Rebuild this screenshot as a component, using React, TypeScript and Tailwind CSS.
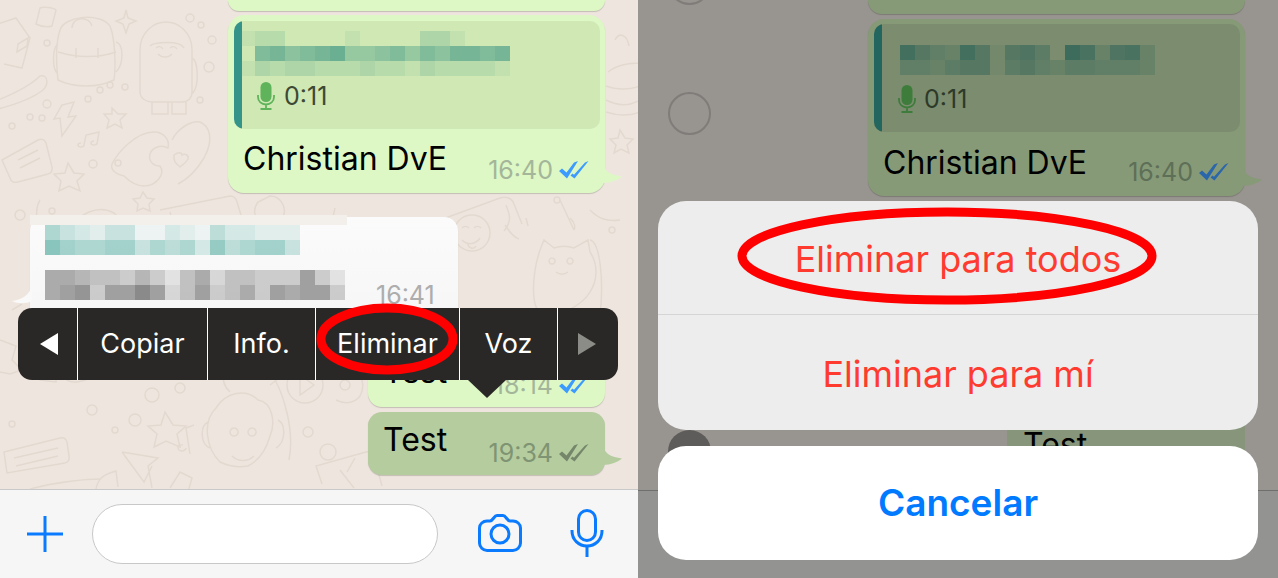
const FONT = "font-['Inter','Liberation_Sans',sans-serif]";

function Pixels({ rows, color, cell = 15 }: { rows: number[][]; color: string; cell?: number }) {
  return (
    <div className="flex flex-col">
      {rows.map((row, i) => (
        <div key={i} className="flex">
          {row.map((v, j) => (
            <div key={j} style={{ width: cell, height: 15, background: color, opacity: v / 10 }} />
          ))}
        </div>
      ))}
    </div>
  );
}

function Checks({ color, className }: { color: string; className?: string }) {
  return (
    <svg className={className} width="30" height="18" viewBox="0 0 30 18" fill={color}>
      <path d="M0 10l3-2.500 4.500 4L15 1.500 19 0 8 17.500z" />
      <path d="M11.500 14.500l2-2 1.500 1.300L26 1.500 29.500 0 15.500 17.500z" />
    </svg>
  );
}

function Tail({ color }: { color: string }) {
  return (
    <svg className="absolute left-full bottom-[9px] -ml-[2px]" width="20" height="20" viewBox="0 0 20 20">
      <path d="M0 0C2 8 8 11 19 12.500C15 16 8 19 0 19Z" fill={color} />
    </svg>
  );
}

function SmallMic({ color }: { color: string }) {
  return (
    <svg width="18" height="28" viewBox="0 0 18 28" fill="none">
      <rect x="3.500" y="0" width="11" height="20" rx="5.500" fill={color} />
      <path d="M1 13v2c0 4.500 3.500 7.500 8 7.500s8-3 8-7.500v-2M9 22.500V27M3.500 27h11" stroke={color} strokeWidth="1.800" />
    </svg>
  );
}

function Doodles() {
  return (
    <svg className="absolute inset-0" width="638" height="489" viewBox="0 0 638 489" fill="none" stroke="#e3d9d0" strokeWidth="1.500">
      {/* milk carton, bread */}
      <path d="M-2 24l18-6 14 20 -8 30-18-4M16 18l14 20M18 44l10 -6 -1 8 -10 6z" />
      <path d="M-2 100c15-6 32-14 42-24 8-2 9 8 3 14-10 8-26 14-45 19" />
      {/* backpack */}
      <path d="M60 30c4-14 40-18 50-4 5 12 6 40 4 54-16 8-40 8-56 0-2-18-2-38 2-50zM72 28c0-12 18-12 20-2M58 52c20 6 40 6 58 0M76 48v10M98 48v10M116 42c8 2 8 22 0 30M58 44c-6 4-6 26 0 30" />
      <path d="M40 8c4-2 14 0 16 2l-4 16c-6 2-12 0-16-2z" />
      {/* star */}
      <path d="M126 10l2 8 8 3-7 3-3 9-3-9-7-3 8-3z" />
      {/* astronaut */}
      <path d="M140 50c0-18 14-28 26-28s26 10 26 28v42c0 6-4 10-10 10h-30c-6 0-12-4-12-10zM150 46c4-4 30-6 34 2M156 48c3-2 5-2 7 1M170 48c3-2 5-2 7 1M158 54c4 4 10 4 14 0M152 102v12h16v-12M172 102v12h14v-12M192 58c6 2 8 28 0 36" />
      <circle cx="47" cy="43" r="3" /><circle cx="190" cy="18" r="4" /><circle cx="201" cy="25" r="3" /><circle cx="209" cy="67" r="5" /><circle cx="212" cy="40" r="4" /><circle cx="125" cy="87" r="3" /><circle cx="110" cy="85" r="3" /><circle cx="100" cy="90" r="3" /><circle cx="88" cy="99" r="3" /><circle cx="47" cy="104" r="4" /><circle cx="12" cy="126" r="3" /><circle cx="30" cy="117" r="3" /><circle cx="42" cy="118" r="3" /><circle cx="200" cy="100" r="3" />
      <path d="M62 105l12-3-6 15 8-1-14 20-2-18-6 1z" />
      <path d="M112 108l6 6 8 0-6 6 2 8-7-4-8 4 2-8-5-6 8 0z" />
      {/* note, card */}
      <path d="M84 145l2-10 13-3-2 12M84 145a3 2 0 1 1 -3-2M97 143a3 2 0 1 1 -3-2" />
      <path d="M2 160l36-20c4-2 7 0 8 3l6 24c1 4-1 6-4 7l-30 8c-4 1-7 0-8-4zM18 160l20-10M20 168l20-10" />
      {/* hearts */}
      <path d="M112 164c6-12 24-32 42-32 10 0 16 8 14 16-8-4-16 0-18 6-2 8 4 12 10 12 6 8-4 20-16 20-8 0-14-4-20-10-8-2-14-6-12-12zM172 140c6-12 20-20 28-18 10 4 14 18 4 36-6 10-14 20-26 26M174 155c4-3 8-3 8 0 3-2 7 0 6 4-2 4-6 6-8 8-3-3-7-5-6-12z" />
      <path d="M68 163l6 10 10 1-7 7 3 10-11-5-10 5 2-10-7-7 11-1z" />
      <path d="M143 192l4 6 7 1-5 5 1 7-7-3-6 3 1-7-5-5 7-1z" />
      <circle cx="20" cy="215" r="5" /><circle cx="52" cy="211" r="3" /><circle cx="93" cy="164" r="4" /><circle cx="118" cy="163" r="3" />
      <path d="M70 235c6-24 30-30 44-22 8 6 8 20 6 30M40 200c-6 10-4 30 6 40M160 210l70-14c4 0 6 2 7 6l8 26M170 212l8 30" />
      <path d="M270 196c10 0 16 10 14 18 -2 10-12 14-20 10-10-4-12-14-6-22zM335 208l-4 18 -16 -4 18 4 18 6M300 215c4 10 4 18 2 24" />
      <path d="M440 220l60-22c6-2 12 0 14 6l8 20M506 205c4 10 6 16-2 26M560 200l14 30M590 210c8 8 16 12 30 10" />
      {/* emoji, cat */}
      <circle cx="472" cy="233" r="18" /><path d="M462 228c2-2 5-2 7 0M474 228c2-2 5-2 7 0M462 240c6 6 14 4 18-2M468 244c0 4 6 6 8 2" />
      <path d="M540 250l4-10 10 8c6-2 14-2 20 0l14-8 2 12c8 12 8 28 0 40-8 14-36 28-48 22-12-6-10-40-2-64zM552 258a3 3 0 1 0 .1 0M570 258a3 3 0 1 0 .1 0M556 272c4 3 8 3 12 0M590 240c10 2 14 40 10 76" />
      <path d="M505 225c4 6 8 12 14 14M526 218l2 8M570 218c4 4 6 8 4 12" />
      <path d="M615 40c4-8 12-6 14 6M608 72c10-8 26-10 34-8M606 86c10 4 24 4 34 0M606 100c12 6 24 6 34 0M606 112c12 4 24 4 34 0" />
      <path d="M620 130l5 8 8 1-6 6 2 8-8-4-7 4 2-8-6-6 8-1z" />
      <circle cx="505" cy="142" r="4" /><circle cx="525" cy="130" r="3" /><circle cx="557" cy="200" r="3" />
      <circle cx="612" cy="230" r="3" />
      {/* lower left */}
      <path d="M0 340l16 6-4 14 10 10-12 4-10-2M40 380l-2-28 14-6-2-14 20 0 0 18-14 6 0 26zM78 372c-16-18-10-48 10-54M88 318l-6 10 16 0M110 344c0 30-34 46-46 34" />
      <path d="M130 340c-8-4-10-16 0-20 4-16 30-20 38-8 14-4 24 8 18 18-4 10-14 12-24 10-10 6-24 6-32 0zM230 392c-14-14-2-28 10-26 0-6 8-6 12-2" />
      <circle cx="152" cy="395" r="7" /><circle cx="180" cy="388" r="5" /><circle cx="12" cy="424" r="3" /><circle cx="92" cy="410" r="5" /><circle cx="135" cy="420" r="6" /><circle cx="115" cy="430" r="3" /><circle cx="205" cy="355" r="3" /><circle cx="232" cy="358" r="4" /><circle cx="285" cy="345" r="3" /><circle cx="305" cy="355" r="4" /><circle cx="320" cy="330" r="3" /><circle cx="345" cy="385" r="5" /><circle cx="308" cy="432" r="5" /><circle cx="328" cy="452" r="8" />
      <path d="M165 412l8 13 13 1-9 8 3 13-14-6-12 6 3-13-9-8 13-1z" />
      <path d="M4 452l56-14c4-1 6 1 7 4l2 14c1 4-1 6-4 7l-58 10zM14 458l44-10M16 466l42-10" />
      <path d="M122 452l36 6-10 8 4 22M122 452l22 30 8-16" />
      <path d="M190 454l-4-26 8-3M186 448a4 3 0 1 1 -3-3" />
      <circle cx="305" cy="385" r="18" /><path d="M300 375l14 10-14 10z" />
      <path d="M342 372c16-8 26 10 18 24 -6 8-16 8-24 4" />
      <path d="M90 345c8-14 26-20 40-10M128 375c-18 0-32-6-36-18" />
      {/* monkey */}
      <path d="M220 462c-14-14-18-40-4-54 10-16 30-20 42-8 14 2 18 22 12 36-4 14-10 24-22 30-12 2-20 0-28-4zM234 428a4 4 0 1 0 .1 0M252 428a4 4 0 1 0 .1 0M232 456c6 6 16 6 22 0M208 422c-8 4-8 22 2 26M278 420c8 4 8 22-2 28M275 380c8 14 20 50 14 80M270 385l8-6" />
      <path d="M322 484l-6-18 50-14c4-1 7 0 8 4l8 30M340 470l14 18" />
      <path d="M170 488l10-16 12 6-4 14M96 489c2-10 6-14 20-18l2 16" />
      <path d="M30 489c30-8 60-10 70-10" />
      <path d="M355 458l-8 14" />
      <path d="M290 330c10 2 20 10 16 24M340 330c2-10 12-14 20-12M22 304l-10 6" />
    </svg>
  );
}

function LeftPanel() {
  return (
    <div className="relative flex h-[578px] w-[638px] flex-col overflow-hidden">
      <div className="relative flex h-[489px] flex-col items-start bg-[#eee6de] pl-[228px]">
        <Doodles />
        <div className="relative h-[11px] w-[377px] rounded-b-[14px] bg-[#ddf8c5] shadow-[0_1px_1px_rgba(0,0,0,0.18)]" />
        <div className="relative mt-[4px] flex h-[178px] w-[377px] flex-col rounded-[16px] bg-[#ddf8c5] px-[6px] pt-[6px] shadow-[0_1px_1px_rgba(0,0,0,0.18)]">
          <Tail color="#ddf8c5" />
          <div className="flex h-[108px] w-[366px] overflow-hidden rounded-[10px] bg-[#cfe8b4]">
            <div className="h-full w-[8px] bg-[#34948a]" />
            <div className="-ml-[2px] flex flex-col pt-[10px]">
              <Pixels
                color="#5fa98e"
                rows={[
                  [1, 2, 2, 0, 0, 0, 0, 1, 0, 0, 0, 0, 3, 3, 1, 0, 0, 0],
                  [0, 7, 8, 6, 7, 8, 9, 5, 5, 6, 7, 5, 7, 6, 8, 8, 7, 8],
                  [1, 3, 2, 3, 3, 2, 2, 2, 3, 2, 2, 1, 3, 2, 2, 2, 2, 1],
                ]}
              />
              <div className="mt-[6px] flex items-center pl-[17px]">
                <SmallMic color="#5fb35a" />
                <span className={`ml-[9px] text-[25px] leading-[28px] text-[#3c4a35] ${FONT}`}>0:11</span>
              </div>
            </div>
          </div>
          <div className="flex pl-[9px] pt-[10px]">
            <span className={`text-[32px] leading-[40px] text-black ${FONT}`}>Christian DvE</span>
          </div>
          <div className="absolute right-[16px] top-[143px] flex items-center">
            <span className={`text-[25px] leading-[24px] text-[#a4b69a] ${FONT}`}>16:40</span>
            <Checks color="#3d9bff" className="ml-[6px]" />
          </div>
        </div>

        <div className="relative -ml-[198px] mt-[24px] h-[128px] w-[428px] rounded-[14px] bg-gradient-to-b from-[#fbfbfb] to-[#f5f5f5] shadow-[0_1px_1px_rgba(0,0,0,0.12)]">
          <svg className="absolute -left-[18px] bottom-[41px]" width="20" height="18" viewBox="0 0 20 18">
            <path d="M20 0C18 8 10 14 0 15C6 18 14 18 20 15Z" fill="#f9f9f9" />
          </svg>
          <div className="absolute left-0 top-[-2px] h-[10px] w-[317px] bg-[#f3efeb]" />
          <div className="absolute left-[15px] top-[8px]">
            <Pixels
              color="#7dbfb6"
              rows={[
                [6, 4, 3, 2, 4, 4, 1, 1, 3, 2, 1, 5, 3, 3, 2, 2, 2],
                [9, 7, 6, 6, 7, 7, 4, 6, 5, 6, 3, 8, 5, 6, 7, 7, 4],
              ]}
            />
          </div>
          <div className="absolute left-[15px] top-[53px]">
            <Pixels
              color="#8a8a8a"
              rows={[
                [7, 7, 6, 5, 5, 4, 6, 4, 2, 5, 7, 3, 5, 5, 4, 4, 4, 8, 4, 2],
                [7, 8, 9, 4, 8, 8, 10, 8, 3, 5, 8, 4, 5, 7, 4, 8, 7, 8, 8, 4],
              ]}
            />
          </div>
          <span className={`absolute left-[346px] top-[66px] text-[25px] leading-[24px] text-[#adadad] ${FONT}`}>16:41</span>
        </div>

        <div className="relative z-0 ml-[140px] mt-[0px] h-[62px] w-[237px] rounded-[14px] bg-[#ddf8c5] shadow-[0_1px_1px_rgba(0,0,0,0.18)]">
          <span className={`absolute left-[15px] top-[7px] text-[32px] leading-[40px] text-black ${FONT}`}>Test</span>
          <div className="absolute right-[16px] top-[28px] flex items-center">
            <span className={`text-[25px] leading-[24px] text-[#a4b69a] ${FONT}`}>18:14</span>
            <Checks color="#3d9bff" className="ml-[6px]" />
          </div>
        </div>
        <div className="relative ml-[140px] mt-[5px] h-[63px] w-[237px] rounded-[14px] bg-[#b5cc9f] shadow-[0_1px_1px_rgba(0,0,0,0.18)]">
          <Tail color="#b5cc9f" />
          <span className={`absolute left-[15px] top-[8px] text-[32px] leading-[40px] text-black ${FONT}`}>Test</span>
          <div className="absolute right-[16px] top-[29px] flex items-center">
            <span className={`text-[25px] leading-[24px] text-[#7f9472] ${FONT}`}>19:34</span>
            <Checks color="#75866a" className="ml-[6px]" />
          </div>
        </div>
      </div>

      <div className="relative flex flex-1 items-center border-t border-[#c9c9c9] bg-[#f6f6f6]">
        <svg className="ml-[26px]" width="38" height="38" viewBox="0 0 38 38" stroke="#0a7aff" strokeWidth="3">
          <path d="M19 1v36M1 19h36" />
        </svg>
        <div className="ml-[28px] h-[60px] w-[346px] rounded-full border border-[#c8c8c8] bg-white" />
        <svg className="ml-[40px] -mt-[2px]" width="44" height="38" viewBox="0 0 44 38" fill="none" stroke="#0a7aff" strokeWidth="3">
          <path d="M9 7h3c3 0 4-5.500 7-5.500h6c3 0 4 5.500 7 5.500h3c4 0 7.500 3 7.500 7v15c0 4-3.500 7.500-7.500 7.500H9c-4 0-7.500-3.500-7.500-7.500V14c0-4 3.500-7 7.500-7z" />
          <circle cx="22" cy="20" r="9" />
        </svg>
        <svg className="ml-[48px] -mt-[2px]" width="34" height="48" viewBox="0 0 34 48" fill="none" stroke="#0a7aff" strokeWidth="3">
          <rect x="8.500" y="1.500" width="17" height="30" rx="8.500" />
          <path d="M2 21v1c0 9 7 15 15 15s15-6 15-15v-1" />
          <path d="M17 37v11" />
        </svg>
      </div>

      {/* popup menu */}
      <div className="absolute left-[18px] top-[308px] flex h-[72px] w-[600px] rounded-[14px] bg-[#2a2826] text-white">
        <div className="flex w-[60px] items-center justify-center border-r border-white pl-[2px]">
          <svg width="18" height="22" viewBox="0 0 18 22" fill="#fff"><path d="M18 0v22L0 11z" /></svg>
        </div>
        {[
          ['Copiar', 'w-[130px]'],
          ['Info.', 'w-[108px]'],
          ['Eliminar', 'w-[144px]'],
          ['Voz', 'w-[98px]'],
        ].map(([label, w]) => (
          <div key={label} className={`flex items-center justify-center border-r border-white text-[27px] ${w} ${FONT}`}>
            {label}
          </div>
        ))}
        <div className="flex flex-1 items-center justify-center pr-[2px]">
          <svg width="18" height="22" viewBox="0 0 18 22" fill="#8b8b87"><path d="M0 0v22L18 11z" /></svg>
        </div>
      </div>
      <svg className="absolute left-[468px] top-[380px]" width="38" height="18" viewBox="0 0 38 18" fill="#2a2826">
        <path d="M0 0h38L19 18z" />
      </svg>
      <svg className="absolute left-[312px] top-[300px]" width="150" height="80" viewBox="0 0 150 80" fill="none" stroke="#ff0000" strokeWidth="9">
        <ellipse cx="75" cy="39" rx="66" ry="31" />
      </svg>
    </div>
  );
}

function RightPanel() {
  return (
    <div className="relative flex h-[578px] w-[640px] flex-col overflow-hidden">
      <div className="relative h-[491px] border-b border-[#6f6f6d] bg-[#989490] pl-[230px]">
        <div className="absolute left-[30px] top-[-38px] h-[43px] w-[43px] rounded-full border-2 border-[#7f7c79]" />
        <div className="absolute left-[30px] top-[92px] h-[43px] w-[43px] rounded-full border-2 border-[#7f7c79]" />
        <div className="h-[14px] w-[377px] rounded-b-[14px] bg-[#879a77] shadow-[0_1px_1px_rgba(0,0,0,0.18)]" />
        <div className="relative mt-[5px] flex h-[177px] w-[377px] flex-col rounded-[16px] bg-[#879a77] px-[6px] pt-[5px] shadow-[0_1px_1px_rgba(0,0,0,0.18)]">
          <Tail color="#879a77" />
          <div className="flex h-[108px] w-[366px] overflow-hidden rounded-[10px] bg-[#7b8d6e]">
            <div className="h-full w-[8px] bg-[#23655f]" />
            <div className="flex flex-col pl-[18px] pt-[21px]">
              <Pixels
                color="#3d6b5c"
                rows={[
                  [9, 6, 4, 3, 9, 6, 1, 6, 7, 5, 0, 10, 8, 3, 7, 8, 3],
                  [4, 4, 3, 5, 6, 6, 1, 5, 6, 4, 3, 5, 5, 4, 4, 4, 3],
                ]}
              />
              <div className="-ml-[2px] mt-[10px] flex items-center">
                <SmallMic color="#3e7c3c" />
                <span className={`ml-[8px] text-[25px] leading-[28px] text-[#2d3a2a] ${FONT}`}>0:11</span>
              </div>
            </div>
          </div>
          <div className="flex pl-[9px] pt-[11px]">
            <span className={`text-[32px] leading-[40px] text-black ${FONT}`}>Christian DvE</span>
          </div>
          <div className="absolute right-[16px] top-[141px] flex items-center">
            <span className={`text-[25px] leading-[24px] text-[#5e6f57] ${FONT}`}>16:40</span>
            <Checks color="#2a66ab" className="ml-[6px]" />
          </div>
        </div>
        <div className="absolute left-[369px] top-[425px] h-[66px] w-[238px] bg-[#87967a]">
          <span className={`absolute left-[16px] top-[0px] text-[32px] leading-[40px] text-black ${FONT}`}>Test</span>
        </div>
        <div className="absolute left-[30px] top-[430px] h-[43px] w-[43px] rounded-full bg-[#5d5c5a]" />
      </div>
      <div className="flex-1 bg-[#939391]" />

      {/* action sheet */}
      <div className="absolute left-[20px] top-[201px] flex w-[600px] flex-col">
        <div className="flex h-[229px] flex-col rounded-[28px] bg-[#ecedec]">
          <div className={`flex h-[114px] items-center justify-center border-b border-[#d5d5d5] pt-[2px] text-[36px] text-[#ff3b30] ${FONT}`}>
            Eliminar para todos
          </div>
          <div className={`flex flex-1 items-center justify-center pt-[2px] text-[36px] text-[#ff3b30] ${FONT}`}>Eliminar para mí</div>
        </div>
        <div className={`mt-[16px] flex h-[114px] items-center justify-center rounded-[28px] bg-white text-[37px] font-semibold text-[#007aff] ${FONT}`}>
          Cancelar
        </div>
      </div>
      <svg className="absolute left-[95px] top-[203px]" width="430" height="106" viewBox="0 0 430 106" fill="none" stroke="#ff0000" strokeWidth="9">
        <ellipse cx="214" cy="53" rx="205" ry="44" />
      </svg>
    </div>
  );
}

export default function App() {
  return (
    <div className="flex h-[578px] w-[1278px] overflow-hidden">
      <LeftPanel />
      <RightPanel />
    </div>
  );
}
